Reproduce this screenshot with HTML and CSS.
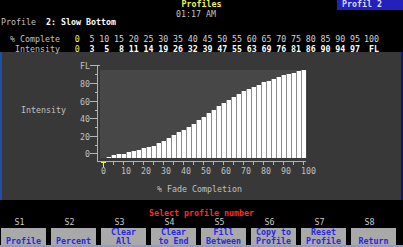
FILE: index.html
```html
<!DOCTYPE html>
<html>
<head>
<meta charset="utf-8">
<link rel="stylesheet" href="styles.css">
</head>
<body>
<div class="screen">
  <header class="top">
    <div class="title">Profiles</div>
    <div class="time">01:17 AM</div>
    <div class="badge">Profil 2</div>
  </header>
  <div class="name"><span class="dim">Profile</span>  <span class="hi">2: Slow Bottom</span></div>
  <div class="table">
    <div class="lbl">% Complete</div>
    <div class="n y">0</div><div class="n">5</div><div class="n">10</div><div class="n">15</div><div class="n">20</div><div class="n">25</div><div class="n">30</div><div class="n">35</div><div class="n">40</div><div class="n">45</div><div class="n">50</div><div class="n">55</div><div class="n">60</div><div class="n">65</div><div class="n">70</div><div class="n">75</div><div class="n">80</div><div class="n">85</div><div class="n">90</div><div class="n">95</div><div class="n">100</div>
    <div class="lbl">Intensity</div>
    <div class="n y">0</div><div class="n w">3</div><div class="n w">5</div><div class="n w">8</div><div class="n w">11</div><div class="n w">14</div><div class="n w">19</div><div class="n w">26</div><div class="n w">32</div><div class="n w">39</div><div class="n w">47</div><div class="n w">55</div><div class="n w">63</div><div class="n w">69</div><div class="n w">76</div><div class="n w">81</div><div class="n w">86</div><div class="n w">90</div><div class="n w">94</div><div class="n w">97</div><div class="n w">FL</div>
  </div>
  <section class="panel">
    <svg class="chart" width="399" height="148" viewBox="2 52 399 148">
      <rect x="100" y="70" width="207" height="88" fill="#474747"/>
      <g shape-rendering="crispEdges">
        <g fill="#8a8a8a">
          <rect x="106" y="157" width="1" height="1"/><rect x="111" y="155" width="1" height="3"/><rect x="116" y="154" width="1" height="4"/><rect x="121" y="154" width="1" height="4"/><rect x="126" y="152" width="1" height="6"/><rect x="131" y="151" width="1" height="7"/><rect x="136" y="150" width="1" height="8"/><rect x="141" y="148" width="1" height="10"/><rect x="146" y="147" width="1" height="11"/><rect x="151" y="146" width="1" height="12"/><rect x="156" y="143" width="1" height="15"/><rect x="161" y="141" width="1" height="17"/><rect x="166" y="138" width="1" height="20"/><rect x="171" y="135" width="1" height="23"/><rect x="176" y="132" width="1" height="26"/><rect x="181" y="130" width="1" height="28"/><rect x="186" y="127" width="1" height="31"/><rect x="191" y="124" width="1" height="34"/><rect x="196" y="120" width="1" height="38"/><rect x="201" y="117" width="1" height="41"/><rect x="206" y="113" width="1" height="45"/><rect x="211" y="110" width="1" height="48"/><rect x="216" y="106" width="1" height="52"/><rect x="221" y="103" width="1" height="55"/><rect x="226" y="100" width="1" height="58"/><rect x="231" y="97" width="1" height="61"/><rect x="236" y="94" width="1" height="64"/><rect x="241" y="91" width="1" height="67"/><rect x="246" y="89" width="1" height="69"/><rect x="251" y="87" width="1" height="71"/><rect x="256" y="85" width="1" height="73"/><rect x="261" y="82" width="1" height="76"/><rect x="266" y="81" width="1" height="77"/><rect x="271" y="79" width="1" height="79"/><rect x="276" y="77" width="1" height="81"/><rect x="281" y="75" width="1" height="83"/><rect x="286" y="74" width="1" height="84"/><rect x="291" y="73" width="1" height="85"/><rect x="296" y="71" width="1" height="87"/><rect x="301" y="70" width="1" height="88"/>
        </g>
        <g fill="#ffffff">
          <rect x="107" y="157" width="4" height="1"/><rect x="112" y="155" width="4" height="3"/><rect x="117" y="154" width="4" height="4"/><rect x="122" y="154" width="4" height="4"/><rect x="127" y="152" width="4" height="6"/><rect x="132" y="151" width="4" height="7"/><rect x="137" y="150" width="4" height="8"/><rect x="142" y="148" width="4" height="10"/><rect x="147" y="147" width="4" height="11"/><rect x="152" y="146" width="4" height="12"/><rect x="157" y="143" width="4" height="15"/><rect x="162" y="141" width="4" height="17"/><rect x="167" y="138" width="4" height="20"/><rect x="172" y="135" width="4" height="23"/><rect x="177" y="132" width="4" height="26"/><rect x="182" y="130" width="4" height="28"/><rect x="187" y="127" width="4" height="31"/><rect x="192" y="124" width="4" height="34"/><rect x="197" y="120" width="4" height="38"/><rect x="202" y="117" width="4" height="41"/><rect x="207" y="113" width="4" height="45"/><rect x="212" y="110" width="4" height="48"/><rect x="217" y="106" width="4" height="52"/><rect x="222" y="103" width="4" height="55"/><rect x="227" y="100" width="4" height="58"/><rect x="232" y="97" width="4" height="61"/><rect x="237" y="94" width="4" height="64"/><rect x="242" y="91" width="4" height="67"/><rect x="247" y="89" width="4" height="69"/><rect x="252" y="87" width="4" height="71"/><rect x="257" y="85" width="4" height="73"/><rect x="262" y="82" width="4" height="76"/><rect x="267" y="81" width="4" height="77"/><rect x="272" y="79" width="4" height="79"/><rect x="277" y="77" width="4" height="81"/><rect x="282" y="75" width="4" height="83"/><rect x="287" y="74" width="4" height="84"/><rect x="292" y="73" width="4" height="85"/><rect x="297" y="71" width="4" height="87"/><rect x="302" y="70" width="4" height="88"/>
        </g>
        <g stroke="#b4b4b4" stroke-width="1" fill="none">
          <line x1="97.5" y1="65" x2="97.5" y2="162"/>
          <line x1="97" y1="161.5" x2="306" y2="161.5"/>
          <line x1="90" y1="65.5" x2="100" y2="65.5"/>
          <line x1="90" y1="83.5" x2="97" y2="83.5"/>
          <line x1="90" y1="101.5" x2="97" y2="101.5"/>
          <line x1="90" y1="118.5" x2="97" y2="118.5"/>
          <line x1="90" y1="136.5" x2="97" y2="136.5"/>
          <line x1="90" y1="153.5" x2="97" y2="153.5"/>
          <line x1="95" y1="74.5" x2="97" y2="74.5"/>
          <line x1="95" y1="92.5" x2="97" y2="92.5"/>
          <line x1="95" y1="110.5" x2="97" y2="110.5"/>
          <line x1="95" y1="127.5" x2="97" y2="127.5"/>
          <line x1="95" y1="145.5" x2="97" y2="145.5"/>
          <path d="M113.5 162v3M123.5 162v3M133.5 162v3M143.5 162v3M153.5 162v3M163.5 162v3M173.5 162v3M183.5 162v3M193.5 162v3M203.5 162v3M213.5 162v3M223.5 162v3M233.5 162v3M243.5 162v3M253.5 162v3M263.5 162v3M273.5 162v3M283.5 162v3M293.5 162v3M303.5 162v3"/>
        </g>
        <path d="M101 162.5h5M103.5 162v5" stroke="#f0f040" stroke-width="1" fill="none"/>
      </g>
      <g class="ax">
        <text x="90" y="68.5" text-anchor="end">FL</text>
        <text x="90" y="86.5" text-anchor="end">80</text>
        <text x="90" y="104.5" text-anchor="end">60</text>
        <text x="90" y="121.5" text-anchor="end">40</text>
        <text x="90" y="139.5" text-anchor="end">20</text>
        <text x="90" y="156.5" text-anchor="end">0</text>
        <text x="101" y="174">0</text>
        <text x="121" y="174">10</text>
        <text x="141" y="174">20</text>
        <text x="161" y="174">30</text>
        <text x="181" y="174">40</text>
        <text x="201" y="174">50</text>
        <text x="221" y="174">60</text>
        <text x="241" y="174">70</text>
        <text x="261" y="174">80</text>
        <text x="281" y="174">90</text>
        <text x="301" y="174">100</text>
        <text x="21" y="113">Intensity</text>
        <text x="157" y="191.5">% Fade Completion</text>
      </g>
    </svg>
  </section>
  <div class="prompt">Select profile number</div>
  <div class="slabels">
    <div>S1</div><div>S2</div><div>S3</div><div>S4</div><div>S5</div><div>S6</div><div>S7</div><div>S8</div>
  </div>
  <div class="keys">
    <div class="key"><span>Profile</span></div>
    <div class="key"><span>Percent</span></div>
    <div class="key"><span>Clear</span><span>All</span></div>
    <div class="key"><span>Clear</span><span>to End</span></div>
    <div class="key"><span>Fill</span><span>Between</span></div>
    <div class="key"><span>Copy to</span><span>Profile</span></div>
    <div class="key"><span>Reset</span><span>Profile</span></div>
    <div class="key"><span>Return</span></div>
  </div>
  <div class="strip"></div>
</div>
</body>
</html>
```
FILE: styles.css
```css
* { box-sizing: border-box; }
html, body { margin: 0; padding: 0; background: #000; }
body {
  width: 403px;
  height: 247px;
  overflow: hidden;
  font-family: "DejaVu Sans Mono", "Liberation Mono", monospace;
  font-size: 8.3px;
  color: #c0c0c0;
}
.screen { position: relative; width: 403px; height: 247px; }

.top { height: 18px; }
.title { height: 10px; line-height: 9.7px; text-align: center; color: #f4f45a; font-weight: bold; }
.time { height: 8px; line-height: 9.7px; text-align: center; padding-right: 11px; color: #c4c4c4; }
.badge {
  position: absolute;
  top: 0;
  right: 0;
  width: 66px;
  height: 10px;
  padding-left: 5px;
  line-height: 9.7px;
  background: #2420bc;
  color: #d8d8ff;
  font-weight: bold;
}

.name { height: 9px; line-height: 9.7px; padding-left: 1px; white-space: pre; }
.name .dim { color: #c0c0c0; }
.name .hi { color: #ffffff; font-weight: bold; }

.table {
  margin-top: 8px;
  height: 17px;
  display: grid;
  grid-template-columns: 65px repeat(19, 14.75px) 14.75px 19px;
  grid-template-rows: 9.7px 7.3px;
  line-height: 9.7px;
}
.table .lbl { text-align: right; padding-right: 5px; white-space: pre; color: #c0c0c0; }
.table .n { text-align: right; white-space: pre; color: #d4d4d4; }
.table .w { color: #ffffff; font-weight: bold; }
.table .y { color: #f4f45a; }

.panel {
  height: 148px;
  width: 403px;
  background: #383838;
  border-left: 2px solid #1d4ea8;
  border-right: 2px solid #12127a;
  display: flex;
}
.chart { display: block; }
.ax text {
  font-family: "DejaVu Sans Mono", "Liberation Mono", monospace;
  font-size: 8.3px;
  fill: #c0c0c0;
}

.prompt {
  height: 18px;
  padding-top: 8.6px;
  line-height: 9.66px;
  text-align: center;
  color: #ff2a2a;
  font-weight: bold;
}

.slabels {
  height: 10px;
  padding-top: 0.3px;
  padding-left: 1px;
  line-height: 9.66px;
  display: grid;
  grid-template-columns: repeat(8, 45px);
  grid-template-rows: 9.66px;
  column-gap: 5px;
  color: #cccccc;
}
.slabels div { text-align: center; padding-right: 8px; }

.keys {
  height: 17px;
  padding-left: 1px;
  display: grid;
  grid-template-columns: repeat(8, 45px);
  column-gap: 5px;
}
.key {
  height: 17px;
  background: #a9a9a9;
  color: #2626e6;
  display: flex;
  flex-direction: column;
  justify-content: flex-end;
  align-items: center;
  white-space: pre;
  font-weight: bold;
}
.key span { display: block; height: 8.5px; line-height: 9.66px; }

.strip { height: 2px; background: #8c9ccc; }
```
